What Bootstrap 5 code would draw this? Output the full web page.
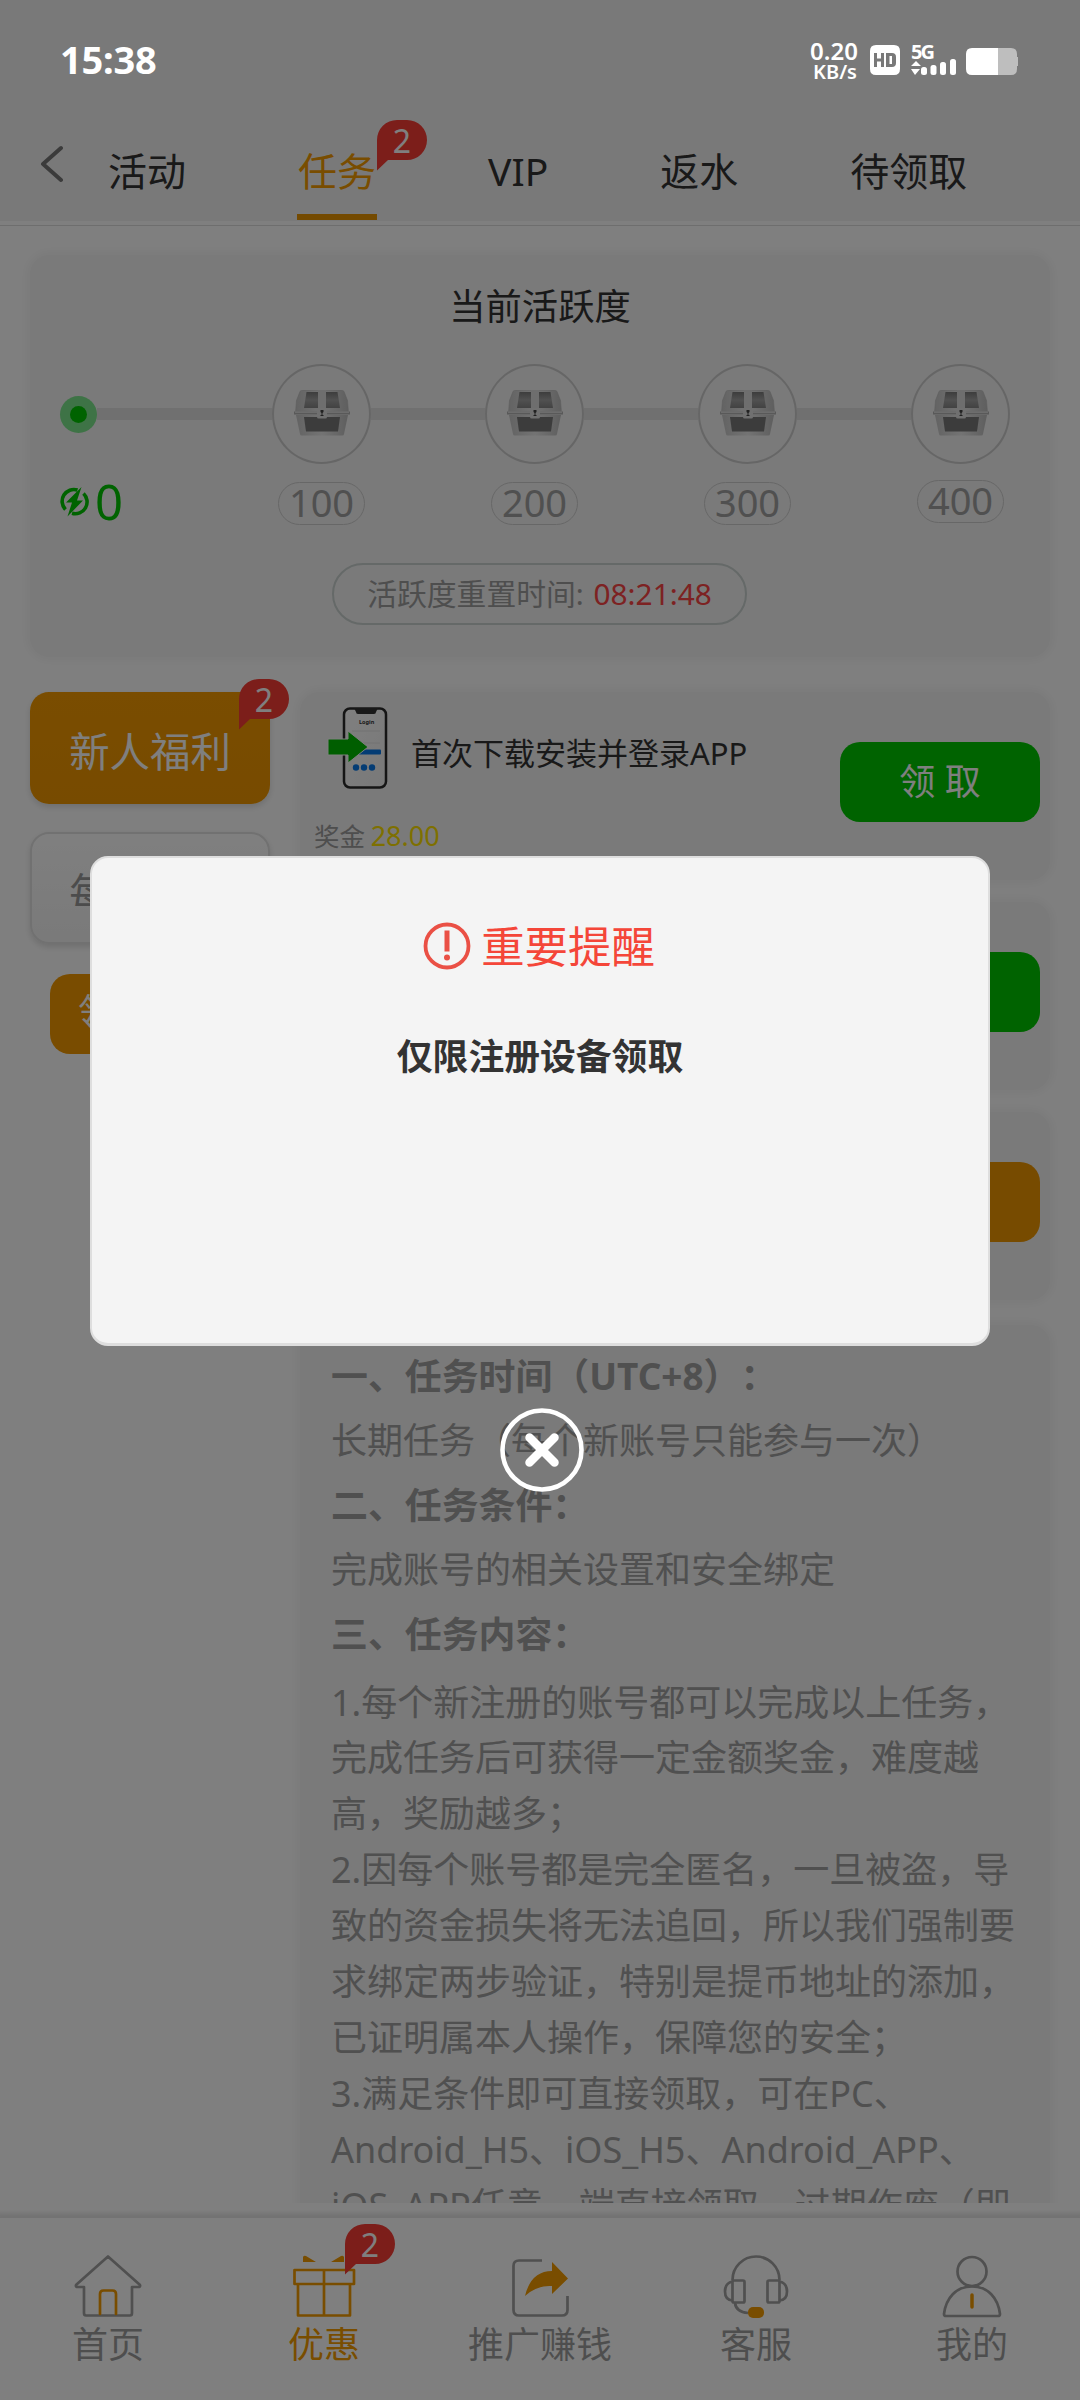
<!DOCTYPE html>
<html lang="zh-CN">
<head>
<meta charset="utf-8">
<meta name="viewport" content="width=device-width, initial-scale=1">
<title>任务</title>
<link href="https://cdn.jsdelivr.net/npm/bootstrap@5.3.0/dist/css/bootstrap.min.css" rel="stylesheet">
<style>
body{font-family:"Noto Sans","Noto Sans CJK SC",sans-serif;background:#fff;color:#333;font-size:36px;line-height:1;width:1080px;text-spacing-trim:space-all;font-feature-settings:"chws" 0,"halt" 0}
.screen{width:1080px;height:2400px}
.top-area{height:221px;background:#f3f3f3}
.status{height:121px;padding:37px 62px 0 60px;color:#fff;z-index:20}
.clock{font-size:38px;line-height:44px;font-weight:700;letter-spacing:-.2px}
.speed{font-weight:600;text-align:center;width:50px;margin-top:2px}
.speed div{font-size:24px;line-height:24px;font-stretch:85%}
.speed div+div{font-size:20px;line-height:18px;padding-left:2px}
.tabs-row{height:100px;font-size:39px;line-height:100px;padding-left:40px}
.tab-cell{white-space:nowrap;height:100px}
.tab-on{color:#f39b00}
.tab-on::after{content:"";position:absolute;left:-1px;right:-1px;bottom:1px;height:6px;background:#e99400}
.hair{height:5px;border-bottom:1px solid #dcdcdc}
.bubble{position:absolute;width:50px;height:51px;z-index:2}
.bubble b{position:absolute;left:0;top:0;width:50px;line-height:41px;font-size:32px;font-weight:400;color:#fff;text-align:center}
.bubble svg{display:block}
.panel{background:#f4f4f4;border-radius:20px;box-shadow:0 0 8px 4px #f6f6f6}
.activity{margin:29px 30px 15px;height:402px;padding:33px 30px 0 30px}
.activity h2{font-size:36.3px;line-height:36px;margin:0;text-align:center;font-weight:400}
.track{margin-top:40px;height:100px}
.track-line{height:12px;background:#e0e0e0}
.start-dot{width:37px;height:37px;border-radius:50%;background:#7ce68c;display:flex;align-items:center;justify-content:center}
.start-dot i{width:17px;height:17px;border-radius:50%;background:#00c600}
.chest-ring{width:99px;height:100px;border:2px solid #cdcdcd;border-radius:50%;padding-top:24px}
.scores{margin-top:18px;height:44px}
.score-pill{width:87px;height:43px;line-height:39px;border:1px solid #cfcfcf;border-radius:22px;color:#a0a0a0;font-size:38px;text-align:center;margin-right:126px}
.score-pill:last-child{margin-right:0;position:relative;top:-2px}
.zero{width:218px;color:#00c600;height:38px}
.zero span{font-size:49px;line-height:38px}
.reset-pill{width:415px;height:62px;border:2px solid #cad2d0;border-radius:31px;margin:37px auto 0 272px;line-height:58px;font-size:29.8px;color:#9d9d9d;text-align:center;white-space:nowrap}
.reset-pill b{color:#fa4444;font-weight:400;margin-left:2px}
.main-zone{height:1531px;overflow:hidden;padding:20px 30px 0}
.side{width:240px}
.side-btn{height:112px;border-radius:19px;line-height:118px;font-size:40.4px;text-align:center;margin-bottom:28px;border:2px solid #e2e2e2;box-shadow:0 3px 6px #ddd;background:linear-gradient(#fff,#f4f4f4);color:#999;position:relative}
.side-btn.on{background:linear-gradient(#f49a00,#ef9600);border:0;color:#fff;line-height:119px}
.claim-all{width:200px;height:80px;border-radius:20px;background:#f39900;color:#fff;margin:30px auto 0;line-height:76px;text-align:center}
.tasks{width:750px}
.task{height:188px;margin-bottom:22px;padding:0 10px 0 14px}
.task-title{font-size:31px;line-height:40px;white-space:nowrap;margin-left:23px;padding-top:7px}
.bonus{font-size:25.5px;line-height:30px;color:#9c9c9c;height:30px;margin-top:14px}
.bonus b{font-weight:400;font-size:27px;color:#fde000;margin-left:-1px}
.claim{width:200px;height:80px;border-radius:20px;background:#00c600;color:#fff;font-size:36px;line-height:80px;text-align:center;white-space:nowrap;margin-top:50px}
.claim.wait{background:#ee9600}
.rules{margin-top:25px;padding:19px 31px 0 31px;height:900px;font-size:36px;color:#a0a0a0;white-space:nowrap}
.rules h3{font-size:36.9px;line-height:64.5px;margin:0;font-weight:700}
.rules p{margin:0;line-height:64.5px}
.rules .list{line-height:55.9px;padding-top:8px}
.foot{margin-top:15px;height:190px;background:#fff;box-shadow:0 -2px 4px 3px #e6e6e6;position:relative}
.foot-item{width:216px;padding-top:36px;font-size:36px;line-height:40px;color:#9d9d9d;text-align:center;position:relative}
.foot-item svg.pic{display:block;margin:0 auto;width:72px;height:64px;margin-bottom:7px}
.foot-item.on{color:#f39b00}
.shade{position:absolute;inset:0;background:rgba(0,0,0,.5);z-index:10;padding-top:856px}
.dialog-box{width:900px;height:490px;background:#f4f4f4;border:2px solid #dedede;border-bottom-width:3px;border-radius:18px;margin:0 auto;padding-top:61px}
.warn{font-size:43.4px;line-height:56px;color:#f44639}
.note-text{font-size:35.8px;line-height:44px;font-weight:700;color:#333;text-align:center;margin-top:59px}
.x-close{display:block;margin:61px auto 0 499px}
</style>
<script src="https://cdn.jsdelivr.net/npm/bootstrap@5.3.0/dist/js/bootstrap.bundle.min.js"></script>
</head>
<body>
<svg width="0" height="0" class="position-absolute">
<defs>
<linearGradient id="metal" x1="0" x2="1"><stop offset="0" stop-color="#c6c6c6"/><stop offset=".5" stop-color="#e8e8e8"/><stop offset="1" stop-color="#bdbdbd"/></linearGradient>
<linearGradient id="lid" x1="0" y1="0" x2="0" y2="1"><stop offset="0" stop-color="#7a7a7a"/><stop offset=".5" stop-color="#a2a2a2"/><stop offset="1" stop-color="#858585"/></linearGradient>
<symbol id="chest" viewBox="0 0 56 46">
<path d="M6 1.500q1-1.500 3-1.500h38q2 0 3 1.500l3.500 9L54.500 23H1.500L2.500 10.500z" fill="url(#metal)" stroke="#bbb" stroke-width=".6"/>
<path d="M12.500 2H24v16H10zM32 2h11.500L46 18H32z" fill="url(#lid)"/>
<path d="M24 0h8v20h-8z" fill="#dcdcdc"/>
<path d="M2 25h52l-4 19q0 1.500-2 1.500H8q-2 0-2-1.500z" fill="url(#metal)"/>
<path d="M10 27h36l-2 14.500H12z" fill="#787878"/>
<path d="M0 21.500h56v3H0z" fill="#b2b2b2"/><path d="M1 21.500h54v1.200H1z" fill="#e8e8e8"/>
<rect x="23" y="18" width="10" height="10.500" rx="1.500" fill="#e0e0e0"/>
<path d="M26.500 20h3v2l-1 1v2h1v1h-3v-1h1v-2l-1-1z" fill="#444"/>
</symbol>
<symbol id="tip" viewBox="0 0 50 51"><path d="M20 0H30A20 20 0 0 1 30 40H11L0 50.500V20A20 20 0 0 1 20 0z" fill="#f83c34"/></symbol>
</defs>
</svg>
<div class="screen position-relative overflow-hidden">
<header class="top-area">
<div class="status d-flex justify-content-between position-relative">
<div class="clock">15:38</div>
<div class="d-flex">
<div class="speed"><div>0.20</div><div>KB/s</div></div>
<svg width="151" height="46" viewBox="0 0 151 46" class="ms-2" fill="#fff">
<path fill-rule="evenodd" d="M9 8H27Q33 8 33 14V32Q33 38 27 38H9Q3 38 3 32V14Q3 8 9 8zM7 16V30H10V24.500H14V30H17V16H14V21.500H10V16zM19 16V30H25Q29 30 29 26V20Q29 16 25 16zM22.500 19H25V27H22.500z"/>
<text x="44" y="22" font-size="20" font-weight="700" textLength="24">5G</text>
<path d="M44 29l5-5 5 5zM44 32h9l-5 6z"/><rect x="54" y="30" width="6" height="8" rx="2.500"/><rect x="63.500" y="28" width="6" height="10" rx="2.500"/><rect x="73" y="25" width="6" height="13" rx="2.500"/><rect x="83" y="22" width="6" height="16" rx="2.500"/>
<path d="M131 11h13q6 0 6 6v3q3 0 3 2v5q0 2-3 2v3q0 6-6 6h-13z" fill="#bebebe"/><path d="M105 11h26v27h-26q-6 0-6-6V17q0-6 6-6z"/>
</svg>
</div>
</div>
<nav class="tabs-row d-flex">
<svg width="23" height="38" viewBox="0 0 23 38" fill="none" stroke="#777" stroke-width="4" stroke-linecap="round" stroke-linejoin="round" style="margin-top:24px"><path d="M21 3L3 19l18 16"/></svg>
<div class="tab-cell" style="margin-left:45px">活动</div>
<div class="tab-cell tab-on position-relative" style="margin-left:112px">任务
<div class="bubble" style="left:79px;top:-1px"><svg width="50" height="51"><use href="#tip"/></svg><b>2</b></div></div>
<div class="tab-cell" style="margin-left:112px">VIP</div>
<div class="tab-cell" style="margin-left:112px">返水</div>
<div class="tab-cell" style="margin-left:112px">待领取</div>
</nav>
</header>
<div class="hair"></div>
<section class="panel activity">
<h2>当前活跃度</h2>
<div class="track d-flex align-items-center">
<div class="start-dot"><i></i></div><div class="track-line" style="width:175px"></div>
<div class="chest-ring"><svg class="d-block mx-auto" width="56" height="46"><use href="#chest" width="56" height="46"/></svg></div><div class="track-line flex-fill"></div>
<div class="chest-ring"><svg class="d-block mx-auto" width="56" height="46"><use href="#chest" width="56" height="46"/></svg></div><div class="track-line flex-fill"></div>
<div class="chest-ring"><svg class="d-block mx-auto" width="56" height="46"><use href="#chest" width="56" height="46"/></svg></div><div class="track-line flex-fill"></div>
<div class="chest-ring" style="margin-right:10px"><svg class="d-block mx-auto" width="56" height="46"><use href="#chest" width="56" height="46"/></svg></div>
</div>
<div class="scores d-flex">
<div class="zero d-flex align-items-center"><svg width="29" height="31" viewBox="0 0 29 31"><path d="M17.500 4A11.800 11.800 0 0 0 5.500 23.500M12 27.300A11.800 11.800 0 0 0 23.500 7.500" fill="none" stroke="#00c600" stroke-width="3.600"/><path d="M21.500 1L6 16.500h6L7.500 30.500 23 14.500h-6z" fill="#00c600"/></svg><span style="margin-left:6px">0</span></div>
<div class="score-pill">100</div><div class="score-pill">200</div><div class="score-pill">300</div><div class="score-pill">400</div>
</div>
<div class="reset-pill">活跃度重置时间: <b>08:21:48</b></div>
</section>
<main class="main-zone d-flex justify-content-between">
<aside class="side">
<div class="side-btn on">新人福利<div class="bubble" style="left:209px;top:-13px"><svg width="50" height="51"><use href="#tip"/></svg><b>2</b></div></div>
<div class="side-btn">每日任务</div>
<div class="claim-all">领取全部</div>
</aside>
<div class="tasks">
<div class="panel task d-flex justify-content-between">
<div>
<div class="d-flex align-items-center" style="height:115px">
<svg width="74" height="92" viewBox="0 0 74 92">
<defs><linearGradient id="scr" x1="0" y1="0" x2="1" y2="1"><stop offset="0" stop-color="#fff"/><stop offset="1" stop-color="#f2f2f2"/></linearGradient></defs>
<rect x="30" y="4.500" width="42" height="79" rx="6" fill="url(#scr)" stroke="#2b2b2b" stroke-width="2.500"/><path d="M40 4h24l-2 4q0 2-2 2H44q-2 0-2-2z" fill="#333"/>
<text x="45" y="20" font-size="5.500" font-weight="700" fill="#333">Login</text><path d="M38 27h28M38 39h28" stroke="#e4e4e4"/>
<rect x="38" y="45.500" width="29" height="5" rx="1" fill="#0878e8"/><g fill="#0878e8"><circle cx="42" cy="63.500" r="3.200"/><circle cx="50" cy="63.500" r="3.200"/><circle cx="58" cy="63.500" r="3.200"/></g>
<path d="M14 35h20V27l20 16-20 16V51H14z" fill="#00bd00" stroke="#fff" stroke-width="1"/></svg>
<div class="task-title">首次下载安装并登录APP</div>
</div>
<div class="bonus">奖金 <b>28.00</b></div>
</div>
<div class="claim">领 取</div>
</div>
<div class="panel task d-flex justify-content-end"><div class="claim"></div></div>
<div class="panel task d-flex justify-content-end"><div class="claim wait"></div></div>
<div class="panel rules">
<h3>一、任务时间（UTC+8）：</h3><p>长期任务（每个新账号只能参与一次）</p>
<h3>二、任务条件：</h3><p>完成账号的相关设置和安全绑定</p>
<h3>三、任务内容：</h3>
<p class="list">1.每个新注册的账号都可以完成以上任务，<br>完成任务后可获得一定金额奖金，难度越<br>高，奖励越多；<br>2.因每个账号都是完全匿名，一旦被盗，导<br>致的资金损失将无法追回，所以我们强制要<br>求绑定两步验证，特别是提币地址的添加，<br>已证明属本人操作，保障您的安全；<br>3.满足条件即可直接领取，可在PC、<br>Android_H5、iOS_H5、Android_APP、<br>iOS_APP任意一端直接领取，过期作废（即</p>
</div>
</div>
</main>
<footer class="foot d-flex">
<div class="foot-item"><svg class="pic" viewBox="0 0 72 64" fill="none" stroke="#a0a0a0" stroke-width="2.700" stroke-linejoin="round" stroke-linecap="round"><path d="M12 33H5q-2-1-.5-2.500L36 2.500l31.500 28Q69 32 67 33h-7v26q0 2.500-2 2.500H14q-2 0-2-2.500z"/><path d="M28 60V40q0-3.500 3.500-3.500h9q3.500 0 3.500 3.500v20" stroke="#f39b00"/></svg>首页</div>
<div class="foot-item on"><svg class="pic" viewBox="0 0 72 64" fill="none" stroke="#f39b00" stroke-width="2.700" stroke-linejoin="round"><path d="M6.500 16H66v14H6.500zM10 30h52v31.500H10zM36 16v45"/><path d="M15 8V3q1-2 3-1l10 6zM43 8l10-6q2-1 3 1v5z" fill="#f39b00" stroke="none"/></svg>优惠<div class="bubble" style="left:129px;top:6px"><svg width="50" height="51"><use href="#tip"/></svg><b>2</b></div></div>
<div class="foot-item"><svg class="pic" viewBox="0 0 72 64" fill="none" stroke="#a0a0a0" stroke-width="2.700"><path d="M38 6.500H15Q9.500 6.500 9.500 12v44q0 5.500 5.500 5.500h43q5.500 0 5.500-5.500V42"/><path d="M21 42Q27 17 48 17V8l16 16.500L48 40v-8Q33 31 21 42z" fill="#f39b00" stroke="none"/></svg>推广赚钱</div>
<div class="foot-item"><svg class="pic" viewBox="0 0 72 64" fill="none" stroke="#a0a0a0" stroke-width="2.700"><path d="M12.500 26A23.500 23.500 0 0 1 59.500 26"/><rect x="12.500" y="26.500" width="12" height="22" rx="1.500"/><rect x="47.500" y="26.500" width="12" height="22" rx="1.500"/><path d="M12.500 27.500Q5 29 5 37.500t7.500 9M59.500 27.500Q67 29 67 37.500t-7.500 9M15 49q1 9 13 10"/><rect x="28" y="53" width="16" height="11" rx="5" fill="#f39b00" stroke="none"/></svg>客服</div>
<div class="foot-item"><svg class="pic" viewBox="0 0 72 64" fill="none" stroke="#a0a0a0" stroke-width="2.700"><circle cx="36" cy="17.500" r="14.500"/><path d="M10 62q-2 0-2-2C10 44 20 32.500 36 32.500S62 44 64 60q0 2-2 2z"/><path d="M36 41v12" stroke="#f39b00" stroke-width="3.500" stroke-linecap="round"/></svg>我的</div>
</footer>
<div class="shade">
<div class="dialog-box">
<div class="warn d-flex justify-content-center align-items-center"><svg width="48" height="48" viewBox="0 0 48 48" style="margin:-2px 10px 0 -2px"><circle cx="24" cy="24" r="21.500" fill="none" stroke="#ea5045" stroke-width="3.800"/><path d="M24 8.500v21" stroke="#ea5045" stroke-width="5"/><circle cx="24" cy="35.500" r="3" fill="#ea5045"/></svg><span>重要提醒</span></div>
<div class="note-text">仅限注册设备领取</div>
</div>
<svg class="x-close" width="86" height="86" viewBox="0 0 86 86" fill="none" stroke="#fff"><circle cx="43" cy="43" r="39.500" stroke-width="4.600"/><path d="M30.500 30.500l25 25m0-25l-25 25" stroke-width="8.500" stroke-linecap="round"/></svg>
</div>
</div>
</body>
</html>
